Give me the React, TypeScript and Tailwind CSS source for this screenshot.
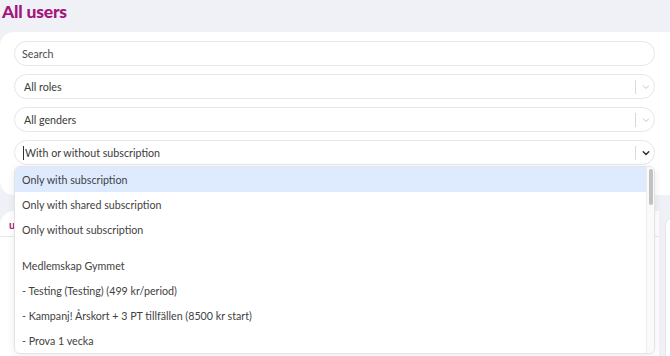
import React from "react";

function Chevron({ dark }: { dark?: boolean }) {
  return (
    <svg width="10" height="10" viewBox="0 0 20 20" className="shrink-0">
      <path
        d="M4.5 7.5 L10 13 L15.5 7.5"
        fill="none"
        stroke={dark ? "#333333" : "#c4c4c4"}
        strokeWidth={dark ? 3 : 2}
        strokeLinecap="round"
        strokeLinejoin="round"
      />
    </svg>
  );
}

function SelectBox({ label, focused }: { label: string; focused?: boolean }) {
  return (
    <div className="h-[25px] w-[641px] rounded-full border border-[#e6e6ea] bg-white flex items-center pl-[9px] pr-[3px]">
      <div className="flex-1 flex items-center text-[#3a3a3a] pt-px">
        {focused && <span className="w-px h-[14px] bg-[#333] mr-[1px] -ml-[1px]" />}
        <span>{label}</span>
      </div>
      <div className="w-px h-[14px] bg-[#d9d9d9] mr-[5px]" />
      <div className="w-[10px] flex items-center justify-center">
        <Chevron dark={focused} />
      </div>
    </div>
  );
}

export default function App() {
  const row = "h-[25px] flex items-center pl-[7px] pt-px";
  return (
    <div
      className="w-[670px] h-[356px] bg-[#eff1f6] overflow-hidden relative text-[10.7px]"
      style={{ fontFamily: "Lato, 'Open Sans', sans-serif" }}
    >
      <h1 className="text-[17.5px] font-black text-[#a3157f] pl-[2px] leading-[24px] tracking-[-0.2px]">
        All users
      </h1>
      <div className="mt-[8px] w-[700px] bg-white rounded-l-[14px] pl-[14px] pt-[9px] pb-[30px] flex flex-col gap-[8px]">
        <div className="h-[25px] w-[641px] rounded-full border border-[#e6e6ea] bg-white flex items-center pl-[7px] pt-px text-[#4a4a4a]">
          Search
        </div>
        <SelectBox label="All roles" />
        <SelectBox label="All genders" />
        <SelectBox label="With or without subscription" focused />
      </div>
      <div className="mt-[16px] flex gap-[6px]">
        <div className="w-[659px] h-[160px] bg-white rounded-tl-[14px] shrink-0">
          <div className="h-[26px] border-b border-[#e8e8ec] pl-[9px] pt-[6px] text-[#a3157f] font-bold">
            u
          </div>
        </div>
        <div className="mt-[5px] w-[40px] h-[160px] bg-white rounded-tl-[10px] border border-[#e6e6ea] shrink-0" />
      </div>

      {/* dropdown menu */}
      <div className="absolute left-[14px] top-[166px] w-[641px] h-[188px] bg-white rounded-[6px] border border-[#e4e4e8] shadow-[0_2px_8px_rgba(0,0,0,0.08)] overflow-hidden flex">
        <div className="flex-1 flex flex-col text-[#3f3f3f]">
          <div className={row + " bg-[#deebff]"}>Only with subscription</div>
          <div className={row}>Only with shared subscription</div>
          <div className={row}>Only without subscription</div>
          <div className="h-[11px]" />
          <div className={row}>Medlemskap Gymmet</div>
          <div className={row}>- Testing (Testing) (499 kr/period)</div>
          <div className={row}>- Kampanj! Årskort + 3 PT tillfällen (8500 kr start)</div>
          <div className={row}>- Prova 1 vecka</div>
        </div>
        <div className="w-[8px] bg-[#fafafa] border-l border-[#ececec] flex justify-center pt-[2px]">
          <div className="w-[4px] h-[36px] rounded-full bg-[#c1c1c1]" />
        </div>
      </div>
    </div>
  );
}
